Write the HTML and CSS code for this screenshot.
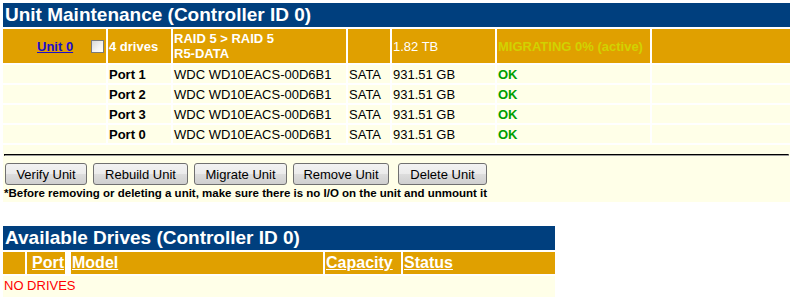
FILE: index.html
```html
<!DOCTYPE html>
<html lang="en">
<head>
    <meta charset="UTF-8">
    <title>Unit Maintenance</title>
    <link rel="stylesheet" href="styles.css">
</head>
<body>

    <!-- Unit maintenance -->
    <table class="panel unit-table">
        <colgroup>
            <col class="u-c1"><col class="u-c2"><col class="u-c3"><col class="u-c4">
            <col class="u-c5"><col class="u-c6"><col class="u-c7">
        </colgroup>
        <tr>
            <td class="title" colspan="7">Unit Maintenance (Controller ID 0)</td>
        </tr>
        <tr class="head unit-head">
            <td class="unit-cell">
                <a href="#" class="unit-link">Unit 0</a>
                <span class="check"></span>
            </td>
            <td class="bold">4 drives</td>
            <td class="bold">RAID 5 &gt; RAID 5<br>R5-DATA</td>
            <td></td>
            <td>1.82 TB</td>
            <td class="migrating">MIGRATING 0% (active)</td>
            <td></td>
        </tr>
        <tr class="drive">
            <td></td>
            <td class="bold">Port 1</td>
            <td>WDC WD10EACS-00D6B1</td>
            <td>SATA</td>
            <td>931.51 GB</td>
            <td class="ok">OK</td>
            <td></td>
        </tr>
        <tr class="drive">
            <td></td>
            <td class="bold">Port 2</td>
            <td>WDC WD10EACS-00D6B1</td>
            <td>SATA</td>
            <td>931.51 GB</td>
            <td class="ok">OK</td>
            <td></td>
        </tr>
        <tr class="drive">
            <td></td>
            <td class="bold">Port 3</td>
            <td>WDC WD10EACS-00D6B1</td>
            <td>SATA</td>
            <td>931.51 GB</td>
            <td class="ok">OK</td>
            <td></td>
        </tr>
        <tr class="drive">
            <td></td>
            <td class="bold">Port 0</td>
            <td>WDC WD10EACS-00D6B1</td>
            <td>SATA</td>
            <td>931.51 GB</td>
            <td class="ok">OK</td>
            <td></td>
        </tr>
        <tr>
            <td class="actions" colspan="7">
                <hr>
                <div class="buttons">
                    <button type="button" class="btn-verify">Verify Unit</button>
                    <button type="button" class="btn-rebuild">Rebuild Unit</button>
                    <button type="button" class="btn-migrate">Migrate Unit</button>
                    <button type="button" class="btn-remove">Remove Unit</button>
                    <button type="button" class="btn-delete">Delete Unit</button>
                </div>
                <div class="note">*Before removing or deleting a unit, make sure there is no I/O on the unit and unmount it</div>
            </td>
        </tr>
    </table>

    <!-- Available drives -->
    <table class="panel drives-table">
        <colgroup>
            <col class="d-c1"><col class="d-c2"><col class="d-gap"><col class="d-c3"><col class="d-c4"><col class="d-c5">
        </colgroup>
        <tr>
            <td class="title" colspan="6">Available Drives (Controller ID 0)</td>
        </tr>
        <tr class="head drives-head">
            <td></td>
            <td class="port-head"><a href="#">Port</a></td>
            <td class="gap"></td>
            <td><a href="#">Model</a></td>
            <td><a href="#">Capacity</a></td>
            <td><a href="#">Status</a></td>
        </tr>
        <tr>
            <td class="empty" colspan="6">NO DRIVES</td>
        </tr>
    </table>

</body>
</html>
```

FILE: styles.css
```css
body {
    margin: 0;
    font-family: "Liberation Sans", Arial, sans-serif;
    font-size: 13px;
    color: #000;
    background: #fff;
}

* {
    box-sizing: border-box;
}

.panel {
    table-layout: fixed;
    border-collapse: separate;
    border-spacing: 2px;
    margin-left: 1px;
}

.panel td {
    padding: 0 1px;
    vertical-align: middle;
    background-color: #ffffe8;
}

.unit-table {
    width: 791px;
    margin-top: 1px;
}

.u-c1 { width: 103px; }
.u-c2 { width: 63px; }
.u-c3 { width: 173px; }
.u-c4 { width: 42px; }
.u-c5 { width: 103px; }
.u-c6 { width: 153px; }
.u-c7 { width: 138px; }

.panel td.title {
    height: 24px;
    padding: 0 2px;
    background-color: #003f7e;
    color: #fff;
    font-size: 19px;
    font-weight: bold;
    line-height: 24px;
    white-space: nowrap;
}

.head td {
    background-color: #e0a000;
    color: #fff;
}

.unit-head td {
    height: 34px;
    line-height: 15px;
}

.bold {
    font-weight: bold;
}

.panel td.unit-cell {
    padding-left: 34px;
    white-space: nowrap;
}

.unit-link {
    color: #1a0dcc;
    font-weight: bold;
    text-decoration: underline;
}

.check {
    display: inline-block;
    width: 13px;
    height: 13px;
    margin-left: 14px;
    vertical-align: -2px;
    border: 1px solid #7a7a7a;
    background: linear-gradient(135deg, #d8d8d8 0%, #f4f4f4 60%, #ffffff 100%);
}

.head td.migrating {
    color: #d2d200;
    font-weight: bold;
}

.drive td {
    height: 18px;
    white-space: nowrap;
}

.ok {
    color: #00a000;
    font-weight: bold;
}

.panel td.actions {
    padding: 1px 1px 2px;
}

.actions hr {
    margin: 8px 0 7px;
    border: 1px inset #9a9a9a;
    border-top-color: #555;
    border-left-color: #555;
}

.buttons {
    display: flex;
    gap: 6px;
    margin-left: 1px;
}

.buttons button {
    height: 22px;
    padding: 0;
    border: 1px solid #707070;
    border-radius: 3px;
    background: linear-gradient(#f2f2f2 0%, #ebebeb 50%, #dddddd 51%, #cfcfcf 100%);
    color: #000;
    font-family: "Liberation Sans", Arial, sans-serif;
    font-size: 13px;
}

.btn-verify { width: 82px; }
.btn-rebuild { width: 95px; }
.btn-migrate { width: 93px; }
.btn-remove { width: 96px; }
.buttons .btn-delete {
    width: 89px;
    margin-left: 3px;
}

.note {
    margin-top: 2px;
    font-size: 11.5px;
    font-weight: bold;
    line-height: 13px;
    white-space: nowrap;
}

/* Available drives */
.drives-table {
    width: 556px;
    margin-top: 20px;
}

.d-c1 { width: 22px; }
.d-c2 { width: 38px; }
.d-gap { width: 2px; }
.d-c3 { width: 252px; }
.d-c4 { width: 76px; }
.d-c5 { width: 152px; }

.drives-head td {
    height: 22px;
}

.head td.gap {
    background-color: #fff;
}

.drives-head a {
    color: #fff;
    font-size: 16px;
    font-weight: bold;
    text-decoration: underline;
}

.panel td.port-head {
    text-align: right;
}

.panel td.empty {
    height: 21px;
    padding-top: 2px;
    vertical-align: top;
    color: #ff0000;
}
```
